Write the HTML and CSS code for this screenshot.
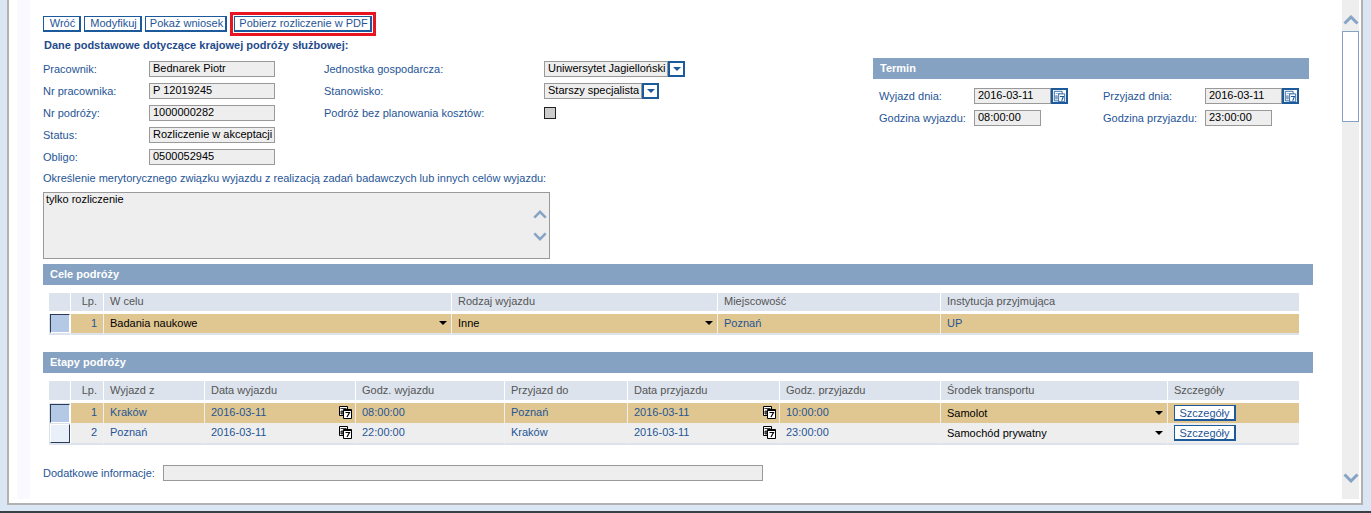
FILE: index.html
```html
<!DOCTYPE html>
<html lang="pl">
<head>
  <meta charset="UTF-8">
  <title>Rozliczenie podróży służbowej</title>
  <link rel="stylesheet" href="styles.css">
</head>
<body>
  <svg class="defs" width="0" height="0">
    <symbol id="cal" viewBox="0 0 13 13">
      <path d="M.5.5h8v9h-8z" fill="#fff" stroke="#000"/>
      <path d="M1.5 2.5h6M2 5h2v3H2z" fill="#888" stroke="#000" stroke-width=".8"/>
      <path d="M4.5 3.5h8v9h-8z" fill="#fff" stroke="#000"/>
      <path d="M5 4.5h7" stroke="#000"/>
      <path d="M6.5 6.5h4L8 11" fill="none" stroke="#000" stroke-width="1.2"/>
    </symbol>
    <symbol id="cal-blue" viewBox="0 0 15 15">
      <path d="M1.5 1.5h9v11h-9z" fill="#fff" stroke="#1c5a9c"/>
      <path d="M3 4h6M3 6.5h2v4H3z" fill="#86a4c6" stroke="#86a4c6"/>
      <path d="M6.5 4.5h7v9h-7z" fill="#fff" stroke="#1c5a9c"/>
      <path d="M8 7.5h4L10 12.5" fill="none" stroke="#1c5a9c" stroke-width="1.3"/>
    </symbol>
    <symbol id="chev-up" viewBox="0 0 16 10">
      <path d="M1.5 8.5 8 2l6.5 6.5" fill="none" stroke="#86a4c6" stroke-width="3"/>
    </symbol>
    <symbol id="chev-down" viewBox="0 0 16 10">
      <path d="M1.5 1.5 8 8l6.5-6.5" fill="none" stroke="#86a4c6" stroke-width="3"/>
    </symbol>
  </svg>

  <div class="frame">
    <div class="gutter"></div>

    <div class="content">
      <!-- Przyciski -->
      <div class="toolbar">
        <button class="btn">Wróć</button>
        <button class="btn">Modyfikuj</button>
        <button class="btn">Pokaż wniosek</button>
        <button class="btn btn-marked">Pobierz rozliczenie w PDF</button>
      </div>

      <h3 class="title">Dane podstawowe dotyczące krajowej podróży służbowej:</h3>

      <!-- Dane podstawowe -->
      <div class="top">
        <div class="col-left">
          <div class="row"><label>Pracownik:</label><div class="field w126">Bednarek Piotr</div></div>
          <div class="row"><label>Nr pracownika:</label><div class="field w126">P 12019245</div></div>
          <div class="row"><label>Nr podróży:</label><div class="field w126">1000000282</div></div>
          <div class="row"><label>Status:</label><div class="field w126">Rozliczenie w akceptacji</div></div>
          <div class="row"><label>Obligo:</label><div class="field w126">0500052945</div></div>
        </div>

        <div class="col-mid">
          <div class="row"><label>Jednostka gospodarcza:</label><div class="field w124">Uniwersytet Jagielloński</div><span class="drop"><i></i></span></div>
          <div class="row"><label>Stanowisko:</label><div class="field w98">Starszy specjalista</div><span class="drop"><i></i></span></div>
          <div class="row"><label>Podróż bez planowania kosztów:</label><span class="check"></span></div>
        </div>

        <div class="col-right">
          <div class="bar">Termin</div>
          <div class="term">
            <div class="row">
              <label>Wyjazd dnia:</label><div class="field w77">2016-03-11</div><span class="cal-btn"><svg width="15" height="15"><use href="#cal-blue"/></svg></span>
              <label class="second">Przyjazd dnia:</label><div class="field w77">2016-03-11</div><span class="cal-btn"><svg width="15" height="15"><use href="#cal-blue"/></svg></span>
            </div>
            <div class="row">
              <label>Godzina wyjazdu:</label><div class="field w67">08:00:00</div>
              <label class="second after-short">Godzina przyjazdu:</label><div class="field w67">23:00:00</div>
            </div>
          </div>
        </div>
      </div>

      <div class="purpose-label">Określenie merytorycznego związku wyjazdu z realizacją zadań badawczych lub innych celów wyjazdu:</div>
      <div class="memo">
        <span>tylko rozliczenie</span>
        <div class="memo-arrows">
          <svg width="14" height="9"><use href="#chev-up"/></svg>
          <svg width="14" height="9"><use href="#chev-down"/></svg>
        </div>
      </div>

      <!-- Cele podrozy -->
      <div class="bar bar-goals">Cele podróży</div>
      <table class="grid goals">
        <colgroup>
          <col class="c22"><col class="c33"><col style="width:348px"><col style="width:266px"><col style="width:223px"><col>
        </colgroup>
        <thead>
          <tr><th></th><th class="num">Lp.</th><th>W celu</th><th>Rodzaj wyjazdu</th><th>Miejscowość</th><th>Instytucja przyjmująca</th></tr>
        </thead>
        <tbody>
          <tr class="active">
            <td class="sel"><span class="sel-box on"></span></td>
            <td class="num">1</td>
            <td class="val"><div class="combo">Badania naukowe<i></i></div></td>
            <td class="val"><div class="combo">Inne<i></i></div></td>
            <td>Poznań</td>
            <td>UP</td>
          </tr>
        </tbody>
      </table>

      <!-- Etapy podrozy -->
      <div class="bar bar-stages">Etapy podróży</div>
      <table class="grid stages">
        <colgroup>
          <col class="c22"><col class="c33"><col style="width:101px"><col style="width:151px"><col style="width:149px"><col style="width:123px"><col style="width:152px"><col style="width:161px"><col style="width:227px"><col>
        </colgroup>
        <thead>
          <tr><th></th><th class="num">Lp.</th><th>Wyjazd z</th><th>Data wyjazdu</th><th>Godz. wyjazdu</th><th>Przyjazd do</th><th>Data przyjazdu</th><th>Godz. przyjazdu</th><th>Środek transportu</th><th>Szczegóły</th></tr>
        </thead>
        <tbody>
          <tr class="active">
            <td class="sel"><span class="sel-box on"></span></td>
            <td class="num">1</td>
            <td>Kraków</td>
            <td><div class="dated">2016-03-11<svg width="13" height="13"><use href="#cal"/></svg></div></td>
            <td>08:00:00</td>
            <td>Poznań</td>
            <td><div class="dated">2016-03-11<svg width="13" height="13"><use href="#cal"/></svg></div></td>
            <td>10:00:00</td>
            <td class="val"><div class="combo">Samolot<i></i></div></td>
            <td><button class="btn btn-small">Szczegóły</button></td>
          </tr>
          <tr class="plain">
            <td class="sel"><span class="sel-box"></span></td>
            <td class="num">2</td>
            <td>Poznań</td>
            <td><div class="dated">2016-03-11<svg width="13" height="13"><use href="#cal"/></svg></div></td>
            <td>22:00:00</td>
            <td>Kraków</td>
            <td><div class="dated">2016-03-11<svg width="13" height="13"><use href="#cal"/></svg></div></td>
            <td>23:00:00</td>
            <td class="val"><div class="combo">Samochód prywatny<i></i></div></td>
            <td><button class="btn btn-small">Szczegóły</button></td>
          </tr>
        </tbody>
      </table>

      <div class="extra">
        <label>Dodatkowe informacje:</label>
        <div class="field w600"></div>
      </div>
    </div>

    <!-- Pasek przewijania -->
    <div class="scroll">
      <svg class="scroll-up" width="16" height="10"><use href="#chev-up"/></svg>
      <div class="thumb"></div>
      <svg class="scroll-down" width="16" height="10"><use href="#chev-down"/></svg>
    </div>
  </div>
</body>
</html>
```

FILE: styles.css
```css
/* Reset & Base */
* { box-sizing: border-box; margin: 0; padding: 0; }
html, body { height: 513px; overflow: hidden; }
body {
  background: #dae6f3;
  border-bottom: 2px solid #3a3f45;
  font-family: "Liberation Sans", Arial, sans-serif;
  font-size: 11px;
  color: #1f5596;
}
.defs { display: block; height: 0; }

/* Frame */
.frame {
  display: flex;
  width: 1356px;
  height: 505px;
  margin-left: 7px;
  padding: 0 2px 4px 8px;
  background: #fff;
  border-left: 2px solid #b2b2b2;
  border-right: 2px solid #b2b2b2;
  border-bottom: 2px solid #b2b2b2;
}
.gutter { width: 13px; background: #f9f9ff; }
.content { width: 1312px; padding: 16px 0 0 13px; }

/* Toolbar */
.toolbar { display: flex; height: 16px; }
.btn {
  height: 16px;
  margin-right: 3px;
  padding: 0 0 1px 2px;
  background: #fff;
  border: 1px solid #1c5a9c;
  border-right-width: 2px;
  border-bottom-width: 2px;
  color: #1f5596;
  font: 11px "Liberation Sans", Arial, sans-serif;
  line-height: 12px;
  white-space: nowrap;
}
.toolbar .btn:nth-child(1) { width: 38px; }
.toolbar .btn:nth-child(2) { width: 58px; }
.toolbar .btn:nth-child(3) { width: 82px; margin-right: 7px; }
.btn-marked {
  width: 138px;
  outline: 3px solid #e8141f;
  outline-offset: 1px;
}
.title {
  margin: 7px 0 9px 1px;
  height: 13px;
  font-size: 11px;
  line-height: 13px;
  color: #1f4b8c;
}

/* Basic data */
.top { display: flex; height: 107px; }
.col-left { width: 281px; }
.col-mid { width: 549px; }
.col-right { width: 436px; margin-top: -3px; }
.row { display: flex; align-items: center; height: 16px; margin-bottom: 6px; }
.col-left label { width: 106px; }
.col-mid label { width: 220px; }
.field {
  height: 16px;
  padding: 0 3px;
  background: #eee;
  border: 1px solid #999;
  color: #000;
  line-height: 12px;
  white-space: nowrap;
  overflow: hidden;
}
.w126 { width: 126px; }
.w124 { width: 124px; }
.w98 { width: 98px; }
.w77 { width: 77px; }
.w67 { width: 67px; }
.w600 { width: 600px; }
.drop {
  display: flex;
  align-items: center;
  justify-content: center;
  width: 17px;
  height: 16px;
  background: #fff;
  border: 2px solid #1c5a9c;
}
.drop i {
  border-left: 4px solid transparent;
  border-right: 4px solid transparent;
  border-top: 4px solid #1c5a9c;
}
.check {
  width: 12px;
  height: 12px;
  background: #ccc;
  border: 1px solid #222;
}

/* Section bars */
.bar {
  height: 21px;
  padding-left: 7px;
  background: #85a2c2;
  color: #fff;
  font-weight: bold;
  line-height: 20px;
}
.term { padding: 9px 0 0 6px; }
.term label { width: 95px; }
.term .second { width: 102px; margin-left: 35px; }
.term .after-short { margin-left: 62px; }
.cal-btn {
  display: flex;
  align-items: center;
  justify-content: center;
  width: 17px;
  height: 16px;
  background: #fff;
  border: 2px solid #1c5a9c;
}

/* Purpose */
.purpose-label { height: 13px; margin: 4px 0 7px; line-height: 13px; }
.memo {
  display: flex;
  justify-content: space-between;
  width: 507px;
  height: 67px;
  padding: 0 2px;
  background: #eee;
  border: 1px solid #999;
  color: #000;
  line-height: 12px;
}
.memo-arrows {
  display: flex;
  flex-direction: column;
  gap: 13px;
  padding-top: 17px;
}
.bar-goals, .bar-stages { width: 1270px; }
.bar-goals { margin-top: 5px; }
.bar-stages { margin-top: 17px; }

/* Tables */
.grid {
  table-layout: fixed;
  width: 1250px;
  margin: 8px 0 0 6px;
  border-collapse: separate;
  border-spacing: 0;
}
.c22 { width: 22px; }
.c33 { width: 33px; }
.grid th {
  height: 21px;
  padding: 0 0 2px 6px;
  background: #dce3ed;
  border-right: 1px solid #fff;
  border-bottom: 3px solid #fff;
  color: #555;
  font-weight: normal;
  text-align: left;
}
.stages th { height: 22px; }
.grid th:last-child, .grid td:last-child { border-right: 0; }
.grid td {
  height: 21px;
  padding: 0 0 2px 6px;
  border-right: 1px solid #eef0f4;
  white-space: nowrap;
}
.grid th.num, .grid td.num { padding: 0 6px 2px 0; text-align: right; }
.grid td.sel { padding: 0; background: #dce3ed; border-right: 1px solid #fff; }
.active td { background: #e0c791; }
.plain td { background: #eee; height: 22px; border-bottom: 2px solid #dce3ed; }
.grid td.val { color: #000; padding-bottom: 1px; }
.goals td { height: 21px; border-bottom: 2px solid #dce3ed; }
.stages .active td { height: 20px; }
.sel-box {
  display: block;
  width: 20px;
  height: 19px;
  margin-left: 1px;
  background: #e9f0f9;
  border: 1px solid;
  border-color: #fff #2b3a55 #2b3a55 #fff;
}
.sel-box.on {
  background: #b3c9e6;
  border-color: #2b3a55 #fff #fff #2b3a55;
}
.combo {
  display: flex;
  align-items: center;
  justify-content: space-between;
  padding-right: 4px;
}
.combo i {
  border-left: 4px solid transparent;
  border-right: 4px solid transparent;
  border-top: 4px solid #000;
}
.dated {
  display: flex;
  align-items: center;
  justify-content: space-between;
  padding-right: 3px;
}
.btn-small { display: block; width: 62px; margin: 2px 0 0; padding: 0; }

/* Extra */
.extra { display: flex; align-items: center; margin: 20px 0 0; }
.extra label { width: 120px; }

/* Scrollbar */
.scroll {
  display: flex;
  flex-direction: column;
  align-items: center;
  width: 17px;
  background: #eee;
}
.scroll-up { margin-top: 15px; }
.thumb {
  width: 17px;
  height: 91px;
  margin-top: 6px;
  background: #fff;
  border: 1px solid #85a2c2;
}
.scroll-down { margin-top: auto; margin-bottom: 16px; }
```
